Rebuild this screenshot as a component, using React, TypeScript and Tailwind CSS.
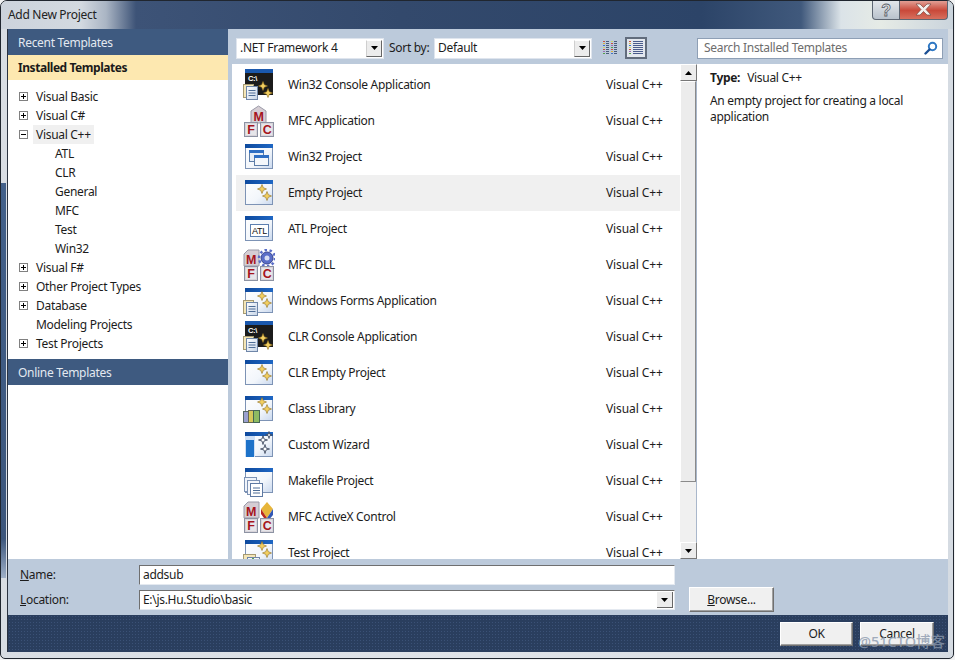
import React from "react";

const font = "font-['Noto_Sans','Open_Sans',sans-serif]";

function Defs() {
  return (
    <svg width="0" height="0" className="absolute">
      <defs>
        <linearGradient id="winbody" x1="0" y1="0" x2="1" y2="1">
          <stop offset="0" stopColor="#ffffff" />
          <stop offset="0.6" stopColor="#f2f6fb" />
          <stop offset="1" stopColor="#c9d8ee" />
        </linearGradient>
        <linearGradient id="winbar" x1="0" y1="0" x2="1" y2="0">
          <stop offset="0" stopColor="#0e4a9e" />
          <stop offset="1" stopColor="#1f67c4" />
        </linearGradient>
        <linearGradient id="doc" x1="0" y1="0" x2="1" y2="1">
          <stop offset="0" stopColor="#ffffff" />
          <stop offset="1" stopColor="#c7d5e8" />
        </linearGradient>
      </defs>
    </svg>
  );
}

function Spark({ x, y, s = 1 }: { x: number; y: number; s?: number }) {
  return (
    <g transform={`translate(${x} ${y}) scale(${s})`}>
      <path d="M0 -4.5 L1.3 -1.3 L4.5 0 L1.3 1.3 L0 4.5 L-1.3 1.3 L-4.5 0 L-1.3 -1.3 Z" fill="#f2cf62" stroke="#8f6d1b" strokeWidth="0.6" />
    </g>
  );
}

function Sparks({ dx = 0, dy = 0 }: { dx?: number; dy?: number }) {
  return (
    <g transform={`translate(${dx} ${dy})`}>
      <Spark x={19} y={12} />
      <Spark x={24} y={19} />
    </g>
  );
}

function Win({ y = 3, x = 2, w = 28, h = 25 }: { y?: number; x?: number; w?: number; h?: number }) {
  return (
    <g>
      <rect x={x + 0.5} y={y + 0.5} width={w - 1} height={h - 1} fill="url(#winbody)" stroke="#7d93b5" />
      <rect x={x} y={y} width={w} height={4} fill="url(#winbar)" />
    </g>
  );
}

function Doc({ x, y }: { x: number; y: number }) {
  return (
    <g transform={`translate(${x} ${y})`}>
      <rect x="0.5" y="1.5" width="10" height="13" fill="#f4e6b8" stroke="#a69a72" />
      <rect x="3.5" y="3.5" width="11" height="13" fill="url(#doc)" stroke="#6f86a8" />
      <path d="M5.5 7.5h7M5.5 10h7M5.5 12.5h7" stroke="#4e6d96" strokeWidth="1" />
    </g>
  );
}

function Block({ x, y, w, l, c = "#a5141c" }: { x: number; y: number; w: number; l: string; c?: string }) {
  return (
    <g>
      <rect x={x + 0.5} y={y + 0.5} width={w - 1} height={w} fill="#d8d4da" stroke="#8d93a3" />
      <rect x={x + 2} y={y + 2} width={w - 4} height={w - 3} fill="#e6e6ea" />
      <text x={x + w / 2} y={y + w - 2.5} textAnchor="middle" fontFamily="Liberation Sans" fontWeight="700" fontSize="12.5" fill={c}>
        {l}
      </text>
    </g>
  );
}

function Mfc({ top }: { top: "m" | "gear" | "cube" }) {
  return (
    <g>
      {top === "m" ? (
        <g>
          <path d="M8 6 L15.5 1 L23 6 V18 H8 Z" fill="#d5cdd3" stroke="#9a9aa8" />
          <text x="15.5" y="16" textAnchor="middle" fontFamily="Liberation Sans" fontWeight="700" fontSize="12.5" fill="#a5141c">M</text>
        </g>
      ) : (
        <g>
          <path d="M1 5 L5 1 H16 V17 H1 Z" fill="#d5cdd3" stroke="#9a9aa8" />
          <text x="8" y="15" textAnchor="middle" fontFamily="Liberation Sans" fontWeight="700" fontSize="12.5" fill="#a5141c">M</text>
          {top === "gear" ? (
            <g>
              <circle cx="24" cy="9" r="6" fill="#5a6ec8" stroke="#39468f" />
              <circle cx="24" cy="9" r="8" fill="none" stroke="#5a6ec8" strokeWidth="2.5" strokeDasharray="2.5 2.5" />
              <circle cx="24" cy="9" r="2.5" fill="#d8def4" />
            </g>
          ) : (
            <g>
              <path d="M24 1 L30 8 L24 17 L18 8 Z" fill="#e7b53a" />
              <path d="M18 8 L24 17 V21 L18 13 Z" fill="#b8281f" />
              <path d="M30 8 L24 17 V21 L30 14 Z" fill="#3257b5" />
            </g>
          )}
        </g>
      )}
      <Block x={1} y={17} w={14} l="F" />
      <Block x={17} y={17} w={14} l="C" />
    </g>
  );
}

function Console() {
  return (
    <g>
      <rect x="2" y="0" width="28" height="4" fill="#1a58ad" />
      <rect x="2" y="4" width="28" height="22" fill="#1b1b1b" />
      <text x="5" y="12" fontFamily="Liberation Sans" fontWeight="700" fontSize="7.5" fill="#ffffff">C:\</text>
    </g>
  );
}

function Star({ x, y, r }: { x: number; y: number; r: number }) {
  const k = r * 0.22;
  return (
    <path
      d={`M${x} ${y - r} L${x + k} ${y - k} L${x + r} ${y} L${x + k} ${y + k} L${x} ${y + r} L${x - k} ${y + k} L${x - r} ${y} L${x - k} ${y - k} Z`}
      fill="#fff"
      stroke="#2d3a52"
      strokeWidth="0.8"
    />
  );
}

function Icon({ kind }: { kind: string }) {
  let body: React.ReactNode = null;
  switch (kind) {
    case "console":
      body = (
        <g>
          <Console />
          <Sparks dx={1} dy={5} />
          <Doc x={0} y={14} />
        </g>
      );
      break;
    case "mfc":
      body = <Mfc top="m" />;
      break;
    case "win32":
      body = (
        <g>
          <Win />
          <rect x="6.5" y="9.5" width="14" height="11" fill="#e7eef8" stroke="#5d7da8" />
          <rect x="6" y="9" width="15" height="3" fill="#2f6fc4" />
          <rect x="11.5" y="14.5" width="14" height="10" fill="#f4f7fb" stroke="#5d7da8" />
          <rect x="11" y="14" width="15" height="3" fill="#2f6fc4" />
        </g>
      );
      break;
    case "empty":
      body = (
        <g>
          <Win />
          <Sparks />
        </g>
      );
      break;
    case "atl":
      body = (
        <g>
          <Win />
          <rect x="7.5" y="11.5" width="18" height="12" fill="#ffffff" stroke="#5c7fb0" />
          <text x="16.5" y="21" textAnchor="middle" fontFamily="Liberation Sans" fontSize="9" fill="#111">ATL</text>
        </g>
      );
      break;
    case "dll":
      body = <Mfc top="gear" />;
      break;
    case "forms":
      body = (
        <g>
          <Win />
          <Sparks dy={-1} />
          <Doc x={0} y={14} />
        </g>
      );
      break;
    case "library":
      body = (
        <g>
          <Win />
          <Sparks dy={-3} />
          <rect x="0.5" y="18.5" width="5" height="11" fill="#9aa0d0" stroke="#556666" />
          <rect x="5.5" y="17.5" width="5" height="12" fill="#d6c85a" stroke="#666655" />
          <rect x="10.5" y="17.5" width="6" height="12" fill="#8dbb62" stroke="#446655" />
        </g>
      );
      break;
    case "wizard":
      body = (
        <g>
          <Win />
          <rect x="2" y="7" width="10" height="21" fill="#cfe0f5" />
          <rect x="3" y="11" width="8" height="17" fill="#1d72c9" />
          <Star x={20} y={11} r={4.5} />
          <Star x={26} y={6} r={3.5} />
          <Star x={22} y={20} r={4.5} />
        </g>
      );
      break;
    case "makefile":
      body = (
        <g>
          <Win />
          <rect x="1.5" y="12.5" width="12" height="14" fill="#f0f4fa" stroke="#7d93b5" />
          <rect x="4.5" y="15.5" width="12" height="14" fill="#f5f7fb" stroke="#7d93b5" />
          <rect x="7.5" y="18.5" width="12" height="13" fill="#ffffff" stroke="#5f7aa3" />
          <path d="M10 23h7M10 25.5h7M10 28h7" stroke="#4e6d96" />
        </g>
      );
      break;
    case "activex":
      body = <Mfc top="cube" />;
      break;
    case "test":
      body = (
        <g>
          <Win />
          <Sparks dy={-3} />
          <rect x="0.5" y="17.5" width="12" height="14" fill="#f4e6b8" stroke="#a69a72" />
          <rect x="4.5" y="20.5" width="12" height="12" fill="#f5f7fb" stroke="#6f86a8" />
          <path d="M10 21 L15 27 H5 Z" fill="#a9d9a0" stroke="#4c9a4a" />
        </g>
      );
      break;
  }
  return (
    <svg width="32" height="32" viewBox="0 0 32 32" className="shrink-0">
      {body}
    </svg>
  );
}

function Caret({ up = false }: { up?: boolean }) {
  return (
    <svg width="7" height="4" viewBox="0 0 7 4">
      <path d={up ? "M0 4 L3.5 0 L7 4 Z" : "M0 0 H7 L3.5 4 Z"} fill="#000" />
    </svg>
  );
}

function ScrollBtn({ up = false }: { up?: boolean }) {
  return (
    <div className="h-[17px] w-[17px] shrink-0 flex items-center justify-center bg-[#ececec] border-t border-l border-t-white border-l-white border-r border-b border-r-[#777] border-b-[#777]">
      <Caret up={up} />
    </div>
  );
}

function Combo({ text, w }: { text: string; w: string }) {
  return (
    <div className={`${w} h-[21px] bg-white border border-[#dfe5ee] flex items-center justify-between pl-[3px] pr-[1px]`}>
      <span>{text}</span>
      <div className="w-[16px] h-[17px] flex items-center justify-center bg-[#ececec] border-r border-b border-r-[#666] border-b-[#666] border-t border-l border-t-white border-l-[#cfcfcf]">
        <Caret />
      </div>
    </div>
  );
}

function Box({ open }: { open: boolean }) {
  return (
    <svg width="9" height="9" viewBox="0 0 9 9" className="shrink-0">
      <rect x="0.5" y="0.5" width="8" height="8" fill="#fff" stroke="#808080" />
      <path d={open ? "M2 4.5h5" : "M2 4.5h5M4.5 2v5"} stroke="#000" />
    </svg>
  );
}

const tree: { t: string; box?: boolean; open?: boolean; sel?: boolean; child?: boolean }[] = [
  { t: "Visual Basic", box: true },
  { t: "Visual C#", box: true },
  { t: "Visual C++", box: true, open: true, sel: true },
  { t: "ATL", child: true },
  { t: "CLR", child: true },
  { t: "General", child: true },
  { t: "MFC", child: true },
  { t: "Test", child: true },
  { t: "Win32", child: true },
  { t: "Visual F#", box: true },
  { t: "Other Project Types", box: true },
  { t: "Database", box: true },
  { t: "Modeling Projects" },
  { t: "Test Projects", box: true },
];

const items: [string, string][] = [
  ["console", "Win32 Console Application"],
  ["mfc", "MFC Application"],
  ["win32", "Win32 Project"],
  ["empty", "Empty Project"],
  ["atl", "ATL Project"],
  ["dll", "MFC DLL"],
  ["forms", "Windows Forms Application"],
  ["console", "CLR Console Application"],
  ["empty", "CLR Empty Project"],
  ["library", "Class Library"],
  ["wizard", "Custom Wizard"],
  ["makefile", "Makefile Project"],
  ["activex", "MFC ActiveX Control"],
  ["test", "Test Project"],
];

const swatch = ["#c9503f", "#d9b23c", "#4472c4", "#cdd66a", "#c9503f", "#9a6fb0", "#56a04a"];

function ViewIcon({ detail }: { detail?: boolean }) {
  const rows = [0, 1, 2, 3, 4, 5, 6];
  return (
    <svg width="16" height="16" viewBox="0 0 16 16">
      {rows.map((r) => (
        <g key={r}>
          <rect x="1" y={1 + r * 2} width="2" height="1" fill={swatch[r]} />
          {detail ? (
            <rect x="5" y={1 + r * 2} width="10" height="1" fill="#4a5c8c" />
          ) : (
            <>
              <rect x="4" y={1 + r * 2} width="3" height="1" fill="#4a5c7c" />
              <rect x="9" y={1 + r * 2} width="2" height="1" fill={swatch[(r + 3) % 7]} />
              <rect x="12" y={1 + r * 2} width="3" height="1" fill="#4a5c7c" />
            </>
          )}
        </g>
      ))}
    </svg>
  );
}

function DlgBtn({ w, h = "h-[24px]", children }: { w: string; h?: string; children: React.ReactNode }) {
  return (
    <div className={`${w} ${h} flex items-center justify-center bg-[#f0f0f0] border border-t-white border-l-white border-r-[#707070] border-b-[#707070] shadow-[inset_-1px_-1px_0_#a0a0a0]`}>
      {children}
    </div>
  );
}

export default function App() {
  return (
    <div className={`${font} relative w-[955px] h-[660px] overflow-hidden text-[12px] leading-none tracking-[-0.3px] text-[#1c1c1c] bg-[#f1f2f3]`}>
      <Defs />
      <div className="w-[954px] h-[659px] flex flex-col rounded-t-[7px] rounded-b-[5px] border border-[#20262f] bg-[linear-gradient(90deg,#d8dde3,#dfe3e8_50%,#d5dbe2)] overflow-hidden">
        <div className="h-[28px] shrink-0 flex justify-between pl-[7px] pr-[5px] bg-[linear-gradient(90deg,#ccd3dc_0px,#d3d9e0_80px,#aab5c4_105px,#3d5377_135px,#33496c_400px,#2c4468_700px,#40597c_800px,#dbe3e8_840px,#e6ebe6_880px,#c9d3dc_955px)]">
          <span className="pt-[8px] text-[#222]">Add New Project</span>
          <div className="flex h-[20px] -mt-[1px]">
            <div className="w-[28px] flex items-center justify-center rounded-bl-[4px] border border-t-0 border-[#5d6673] bg-[linear-gradient(#e4e8ec,#b9c2cc)]">
              <svg width="14" height="16" viewBox="0 0 14 16">
                <text x="7" y="14" textAnchor="middle" fontFamily="Liberation Sans" fontWeight="700" fontSize="16" fill="#e6e9ec" stroke="#5a6068" strokeWidth="0.8">?</text>
              </svg>
            </div>
            <div className="w-[48px] flex items-center justify-center rounded-br-[4px] border border-l-0 border-t-0 border-[#5d6673] bg-[linear-gradient(#e5a89e,#c9493a_55%,#d7705e)]">
              <svg width="17" height="13" viewBox="0 0 17 13">
                <path d="M1 1 H5 L8.5 4.5 L12 1 H16 L11 6.5 L16 12 H12 L8.5 8.5 L5 12 H1 L6 6.5 Z" fill="#f3f0ee" stroke="#7a4a42" strokeWidth="0.7" />
              </svg>
            </div>
          </div>
        </div>

        <div className="flex-1 flex flex-col ml-[6px] mr-[5px] mb-[6px] border-l border-[#2a3240] bg-[#bccadb] overflow-hidden">
          <div className="flex flex-1 min-h-0">
            {/* left */}
            <div className="w-[220px] shrink-0 flex flex-col bg-white">
              <div className="h-[26px] shrink-0 pl-[10px] pt-[2px] flex items-center bg-[#3e5a80] text-[#e3e9f1]">Recent Templates</div>
              <div className="h-[25px] shrink-0 pl-[10px] flex items-center bg-[#fde8b0] font-bold tracking-[-0.45px] text-[#1a1a1a]">Installed Templates</div>
              <div className="flex-1 pt-[7px] flex flex-col">
                {tree.map((n) => (
                  <div key={n.t} className="h-[19px] flex items-center">
                    {n.box ? (
                      <div className="w-[28px] pl-[11px] flex shrink-0"><Box open={!!n.open} /></div>
                    ) : (
                      <div className={n.child ? "w-[47px] shrink-0" : "w-[28px] shrink-0"} />
                    )}
                    <span className={n.sel ? "h-[19px] flex items-center -ml-[3px] px-[3px] bg-[#f0f0f0]" : ""}>{n.t}</span>
                  </div>
                ))}
              </div>
              <div className="h-[26px] shrink-0 pl-[10px] pt-[1px] flex items-center bg-[#3e5a80] text-[#e3e9f1]">Online Templates</div>
              <div className="h-[174px] shrink-0" />
            </div>

            {/* middle + right */}
            <div className="flex-1 min-w-0 flex flex-col">
              <div className="h-[35px] shrink-0 flex items-center pl-[8px] pr-[5px] pt-[3px]">
                <Combo text=".NET Framework 4" w="w-[148px]" />
                <span className="ml-[5px] w-[45px]">Sort by:</span>
                <Combo text="Default" w="w-[158px]" />
                <div className="ml-[8px] w-[20px] h-[22px] flex items-center justify-center"><ViewIcon /></div>
                <div className="ml-[5px] w-[22px] h-[22px] flex items-center justify-center bg-[#e2e7ee] border-2 border-[#616c7c]"><ViewIcon detail /></div>
                <div className="ml-[50px] flex-1 h-[21px] bg-white border border-[#8e9fb5] flex items-center justify-between pl-[6px] pr-[4px] text-[#6d6d6d]">
                  <span>Search Installed Templates</span>
                  <svg width="14" height="14" viewBox="0 0 14 14">
                    <circle cx="8.5" cy="5.5" r="3.7" fill="none" stroke="#2f78c4" strokeWidth="2" />
                    <path d="M5.5 8.5 L1.5 12.5" stroke="#1b4f94" strokeWidth="2.4" strokeLinecap="round" />
                  </svg>
                </div>
              </div>
              <div className="flex-1 min-h-0 flex pl-[4px]">
                <div className="w-[448px] shrink-0 bg-white pt-[3px] overflow-hidden">
                  {items.map(([k, t], i) => (
                    <div key={i} className={`h-[36px] flex items-center ${t === "Empty Project" ? "bg-[#f0f0f0] ml-[4px] pl-[7px]" : "pl-[11px]"}`}>
                      <Icon kind={k} />
                      <span className="ml-[13px] flex-1">{t}</span>
                      <span className="w-[74px] tracking-[-0.1px]">Visual C++</span>
                    </div>
                  ))}
                </div>
                <div className="w-[17px] shrink-0 flex flex-col bg-[#f0f0f0] border-r border-[#a9b7cb]">
                  <ScrollBtn up />
                  <div className="h-[401px] shrink-0 bg-[#ececec] border-t border-l border-t-white border-l-white border-r border-b border-r-[#8a8a8a] border-b-[#8a8a8a]" />
                  <div className="flex-1" />
                  <ScrollBtn />
                </div>
                <div className="flex-1 bg-white pl-[13px] pt-[7px]">
                  <div className="h-[13px] flex items-center">
                    <span className="font-bold">Type:</span>
                    <span className="ml-[7px]">Visual C++</span>
                  </div>
                  <p className="mt-[9px] leading-[16px] w-[210px]">An empty project for creating a local application</p>
                </div>
              </div>
            </div>
          </div>

          {/* bottom fields */}
          <div className="h-[56px] shrink-0 flex pt-[6px] pl-[12px]">
            <div className="w-[119px] shrink-0 flex flex-col">
              <div className="h-[20px] flex items-center"><span><u>N</u>ame:</span></div>
              <div className="h-[20px] mt-[5px] flex items-center"><span><u>L</u>ocation:</span></div>
            </div>
            <div className="w-[536px] shrink-0 flex flex-col">
              <div className="h-[20px] bg-white border border-t-[#6f6f6f] border-l-[#6f6f6f] border-r-[#e4e9f0] border-b-[#e4e9f0] pl-[3px] flex items-center">addsub</div>
              <div className="h-[20px] mt-[5px] bg-white border border-t-[#6f6f6f] border-l-[#6f6f6f] border-r-[#e4e9f0] border-b-[#e4e9f0] pl-[3px] pr-[1px] flex items-center justify-between">
                <span>E:\js.Hu.Studio\basic</span>
                <div className="w-[16px] h-[16px] flex items-center justify-center bg-[#ececec] border-r border-b border-r-[#666] border-b-[#666]"><Caret /></div>
              </div>
            </div>
            <div className="ml-[14px] mt-[22px]">
              <DlgBtn w="w-[85px]" h="h-[25px]"><span><u>B</u>rowse...</span></DlgBtn>
            </div>
          </div>

          {/* footer */}
          <div className="h-[37px] shrink-0 flex justify-end items-start gap-[7px] pt-[7px] pr-[14px] bg-[#2a3e5e] bg-[radial-gradient(#3b5176_0.6px,transparent_0.8px)] bg-[length:3px_3px]">
            <DlgBtn w="w-[73px]">OK</DlgBtn>
            <DlgBtn w="w-[74px]">Cancel</DlgBtn>
          </div>
        </div>
      </div>
      <span className="absolute left-[858px] top-[634px] font-['Noto_Sans','Noto_Sans_CJK_SC',sans-serif] font-medium tracking-normal text-[14.5px] text-[#8c9aae]/80">@51CTO博客</span>
      <div className="absolute left-[1px] top-[183px] w-[5px] h-[395px] bg-[linear-gradient(#42608a,#3c567c_90%,#9fb0c8)]" />
    </div>
  );
}
